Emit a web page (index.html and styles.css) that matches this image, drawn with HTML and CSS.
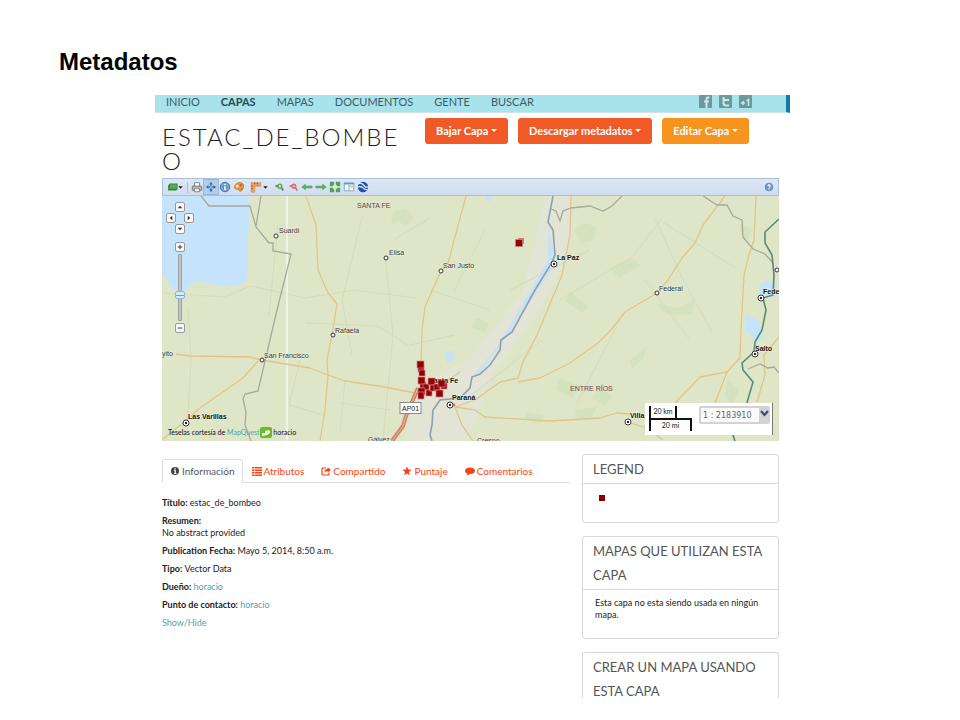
FILE: index.html
```html
<!DOCTYPE html>
<html lang="es">
<head>
<meta charset="utf-8">
<title>Metadatos</title>
<link rel="stylesheet" href="styles.css">
</head>
<body>
<h1 class="slide-title">Metadatos</h1>
<div class="app">
  <header class="topbar">
    <nav class="menu">
      <a href="#">INICIO</a><a href="#" class="current">CAPAS</a><a href="#">MAPAS</a><a href="#">DOCUMENTOS</a><a href="#">GENTE</a><a href="#">BUSCAR</a>
    </nav>
    <div class="social">
      <a href="#" aria-label="Facebook"><svg viewBox="0 0 13 13"><rect width="13" height="13" rx="1" fill="#6f979d"/><path d="M10.500 2.500H9Q7.500 2.500 7.500 4V13M5 6.500h5" fill="none" stroke="#c3edf2" stroke-width="2"/></svg></a>
      <a href="#" aria-label="Twitter"><svg viewBox="0 0 13 13"><rect width="13" height="13" rx="1" fill="#6f979d"/><path d="M4.500 2v6Q4.500 10.500 7 10.500h3M4.500 5H10" fill="none" stroke="#c3edf2" stroke-width="2"/></svg></a>
      <a href="#" aria-label="Google +1"><svg viewBox="0 0 13 13"><rect width="13" height="13" rx="1" fill="#6f979d"/><path d="M2 8h4M4 6v4M7.500 6l2-1.500V11" fill="none" stroke="#c3edf2" stroke-width="1.500"/></svg></a>
    </div>
  </header>

  <main class="content">
    <div class="heading">
      <h2>ESTAC_DE_BOMBEO</h2>
      <div class="actions">
        <button type="button" class="btn">Bajar Capa <i class="caret"></i></button>
        <button type="button" class="btn">Descargar metadatos <i class="caret"></i></button>
        <button type="button" class="btn edit">Editar Capa <i class="caret"></i></button>
      </div>
    </div>

    <section class="viewer">
      <div class="toolbar">
        <button type="button" class="wide" aria-label="Capas"><svg viewBox="0 0 20 14"><path d="M4 3h9v7l-2 1H2V5z" fill="#34843d"/><path d="M4 4h8v5H4z" fill="#5aac52"/><path d="M14 6h5l-2.500 3z" fill="#111"/></svg></button>
        <span class="sep"></span>
        <button type="button" aria-label="Imprimir"><svg viewBox="0 0 14 14"><path d="M4 6V2h6v4" fill="#fff" stroke="#777"/><rect x="1.500" y="6" width="11" height="5" rx="1" fill="#bbb" stroke="#666"/><path d="M4 9h6v3.500H4z" fill="#fff" stroke="#777"/></svg></button>
        <button type="button" class="pressed" aria-label="Mover"><svg viewBox="0 0 14 14"><path d="M7 3v8M3 7h8" stroke="#3974b5" stroke-width="1.500" stroke-dasharray="3 2"/><path d="M5 4l2-3 2 3zM5 10l2 3 2-3zM4 5L1 7l3 2zM10 5l3 2-3 2z" fill="#2c69ad"/></svg></button>
        <button type="button" aria-label="Identificar"><svg viewBox="0 0 14 14"><circle cx="7" cy="7" r="5.500" fill="#5d91c9" stroke="#39699f"/><circle cx="7" cy="7" r="4" fill="none" stroke="#a9c8e8" stroke-width=".8"/><path d="M7 3.500V5M7 6v4.500" stroke="#fff" stroke-width="1.800"/></svg></button>
        <button type="button" aria-label="Estilos"><svg viewBox="0 0 14 14"><path d="M2 6Q4 1 10 2q4 2 2 6-1 4-4 4l-1-2H5Q1 9 2 6z" fill="#ee9a3b" stroke="#c67521"/><circle cx="5" cy="6" r="1.500" fill="#fff1cb"/><circle cx="9" cy="5" r="1.500" fill="#d65c36"/><circle cx="10" cy="9" r="1" fill="#61964b"/></svg></button>
        <button type="button" class="wide measure" aria-label="Medir"><svg viewBox="0 0 20 14"><path d="M1 2h11v4H5v7H1z" fill="#f1a15a" stroke="#c8702c" stroke-width=".6"/><path d="M5 2v2M8 2v2M1 6h2M1 9h2" stroke="#995018"/><path d="M15 6h5l-2.500 3z" fill="#111"/></svg></button>
        <button type="button" aria-label="Acercar"><svg viewBox="0 0 14 14"><circle cx="8" cy="6" r="3" fill="#58a84d"/><path d="M3 6l3 0M10 8l2 3" stroke="#448540" stroke-width="2"/><path d="M6.500 6h3M8 4.500v3" stroke="#fff"/></svg></button>
        <button type="button" aria-label="Alejar"><svg viewBox="0 0 14 14"><circle cx="8" cy="6" r="3" fill="#df6b68"/><path d="M3 6l3 0M10 8l2 3" stroke="#c77772" stroke-width="2"/><path d="M6.500 6h3" stroke="#fff"/></svg></button>
        <button type="button" aria-label="Anterior"><svg viewBox="0 0 14 14"><path d="M1 7l4-3v2h8v2H5v2z" fill="#67b45a" stroke="#3c8837" stroke-width=".7"/></svg></button>
        <button type="button" aria-label="Siguiente"><svg viewBox="0 0 14 14"><path d="M13 7L9 4v2H1v2h8v2z" fill="#67b45a" stroke="#3c8837" stroke-width=".7"/></svg></button>
        <button type="button" aria-label="Extensión"><svg viewBox="0 0 14 14"><path d="M1 1h5v3L4 6H1zM13 1v5h-3L8 4V1zM1 13V8h3l2 2v3zM13 13H8v-3l2-2h3z" fill="#55a44c"/></svg></button>
        <button type="button" aria-label="Leyenda"><svg viewBox="0 0 14 14"><path d="M1.500 2.500h11v9h-11z" fill="#f9fcff" stroke="#6c9ed0"/><path d="M1 2h12v2H1z" fill="#609bd5"/><path d="M8 5h4v3H8z" fill="#f3d46e"/><path d="M7 4v7" stroke="#6c9ed0"/></svg></button>
        <button type="button" aria-label="Vista 3D"><svg viewBox="0 0 14 14"><circle cx="7" cy="7" r="6" fill="#244fa5"/><path d="M2 3q4-1 6 2t5 2M1 7q4-1 6 1t5 2" fill="none" stroke="#e2efff" stroke-width="1.500"/></svg></button>
        <button type="button" class="help" aria-label="Ayuda"><svg viewBox="0 0 14 14"><circle cx="7" cy="7" r="4.500" fill="#7397c8" stroke="#6787b2"/><path d="M5.500 5.500q1.500-2 3 0 0 1-1.500 2M7 8.500V10" fill="none" stroke="#fff" stroke-width="1.300"/></svg></button>
      </div>
      <div class="map">
        <svg class="tiles" viewBox="162 196 617 245" preserveAspectRatio="xMidYMid slice" role="img" aria-label="Mapa de Santa Fe y Entre Ríos">
          <rect x="162" y="196" width="617" height="245" fill="#dfe6c8"/>
          <path d="M545 196h28l-6 60-26 52-48 66-26 66h-62l12-55 54-27 50-64 14-50z" fill="#e2e4d8" opacity=".8"/>
          <path d="M162 196h86l2 10-2 32v32q0 13-10 15-14 3-30-2-13-3-17 2-6 8-14 6-8-3-10-12l-5-6zM759 284l9-4 9 5-3 13-15-4zM745 314l14 7 5 16-10 5-8-12z" fill="#c5e3fb"/>
          <path d="M548 228l7 28-6 18-23 33-19 29-26 36-7 3 24-30 24-40 26-46zM445 352l8-2 2 8-8 6zM485 196h8l-4 7z" fill="#c9e2f3"/>
          <g fill="#c6dcb5" opacity=".4"><path d="M393 212l12-3 9 9-8 8-8-5-7 3zM574 229l11-6 12 4-3 13-13 4zM609 268l24-10 7 7-21 13zM656 303l22 5 18-10-5 17-25-1zM740 224l12 5-4 11-7-5zM570 292l19 15-7 6-17-12zM476 318l13 4-3 11-14-6zM560 378l18 8-5 12-17-8zM599 388l14 8-8 9-13-7zM630 360l17-13-4 12-11 10zM728 380l11 10-7 15-8-10zM575 410l22-3-5 10-15 3zM528 412l17 4-5 8-15-5z"/></g>
          <g fill="none" stroke="#cbd3b6" stroke-width="1" opacity=".6"><path d="M162 293l62 4 27-11 54 12 49-8 63 8M278 225l-9 90M362 217l-20 83 10 55M306 323l72 3 31 20M300 360l-11 45 35 10M345 381l-5 50M385 255l8 80-10 105M430 290l60 20M410 345l45-10M465 400l80-62M560 300l72-43 31-40M655 218l27 60 30 54M663 222l74 47M620 320l-43 83M645 280l45 60M188 310l3 50-4 70M590 250l-80 40M390 410l-50-7M430 218l-35 21M485 230l-31 61"/></g>
          <path d="M287 196v245" stroke="#f5f7ec" stroke-width="1.500"/>
          <g fill="none" stroke="#ddc689" stroke-width="1.300" stroke-linejoin="round">
            <path d="M306 196l10 29 2 45 10 23 9 11-5 31-5 25 1 15-3 35-5 31M466 196l-18 67-7 8-16 36-3 23-1 34M571 196l-1 39-8 40-25 60-14 27-5 16-18 4-25 18-20 7 20 3 10 7 65 4 50-3 17-5 13 1M455 407l7 18 11 16M598 343l-28 20-30 15-22 4M725 196l-22 29-8 18-13 15-14 22-11 13-32 19-14 18-13 13M756 196l-2 44-5 15-5 20-3 55-1 28-13 14-27 5-25 26M727 372l-12 31M779 337l-15 18 1 20-8 27"/>
            <path d="M176 354l14 2 60 1 12 3 48 8 18 7 17 6 40 6 30 6M258 361l-15 17-43 30-17 15-21 17M435 389l25-17M627 422l20 6 16 12"/>
          </g>
          <path d="M418 388l-12 28-3 10-11 15" fill="none" stroke="#cf816a" stroke-width="4"/><path d="M418 388l-12 28-3 10-11 15" fill="none" stroke="#e8b8a0" stroke-width="1"/>
          <g fill="none" stroke="#a8a89d" stroke-width="1.300"><path d="M201 196l8 10h41l6 21 13 16h4v8l18 3-14 56-19 81-13 3-2 5 3 13-1 13 6 16M261 196l-5 30M551 209l5 2 4 10 3-10 8-3 19-2 13 5 9-5 10-10M703 196l14 9h10l6 11 9 4 1 17 10 12 12 5 8 9M748 369l12-5 8 4 6-1 5 6"/></g>
          <path d="M553 196l-5 26 5 8 2 25-4 9-16 26-23 42-11 8-1 10-10 15-10 9-8 3-2 11-10 10-20 2-7 10-1 15-2 10 2 6" fill="none" stroke="#8f9fb2" stroke-width="1.600"/>
          <path d="M779 219l-14 13v11l7 12 2 20-1 20-10 3 3 12-4 20-7 12-1 10-12 11 1 7 10 12-9 31-11 22 2 6" fill="none" stroke="#5a8a75" stroke-width="1.600"/>
          <g fill="#fff" stroke="#333" stroke-width="1"><circle cx="276" cy="236" r="2"/><circle cx="386" cy="258" r="2"/><circle cx="441" cy="271" r="2"/><circle cx="657" cy="293" r="2"/><circle cx="333" cy="335" r="2"/><circle cx="262" cy="360" r="2"/><circle cx="777" cy="270" r="2"/>
          <circle cx="554" cy="264" r="3"/><circle cx="761" cy="298" r="3"/><circle cx="755" cy="354" r="3"/><circle cx="186" cy="423" r="3"/><circle cx="450" cy="405" r="3"/><circle cx="628" cy="422" r="3"/></g>
          <path d="M553 264h2M760 298h2M754 354h2M185 423h2M449 405h2M627 422h2" stroke="#222" stroke-width="2"/>
          <g class="towns"><text x="279" y="233">Suardi</text><text x="389" y="255">Elisa</text><text x="443" y="268">San Justo</text><text x="659" y="291">Federal</text><text x="335" y="333">Rafaela</text><text x="264" y="358">San Francisco</text><text x="162" y="356">yito</text><text x="368" y="442">Gálvez</text><text x="477" y="443">Crespo</text></g>
          <g class="towns major"><text x="557" y="260">La Paz</text><text x="763" y="294">Fede</text><text x="755" y="351">Salto</text><text x="188" y="419">Las Varillas</text><text x="429" y="383">Santa Fe</text><text x="452" y="400">Paraná</text><text x="630" y="418">Villa</text></g>
          <g class="regions"><text x="357" y="208">SANTA FE</text><text x="570" y="391">ENTRE RÍOS</text></g>
          <rect x="400" y="402.500" width="21" height="11" fill="#fff" stroke="#888"/><text x="402" y="411" class="route">AP01</text>
          <rect x="518" y="238" width="6" height="6" fill="#d9797a"/>
          <g fill="#930006" stroke="#cf8889" stroke-width=".7"><rect x="515.500" y="239.500" width="7" height="7"/><rect x="418" y="366" width="6" height="6"/><rect x="417" y="361" width="7" height="7"/><rect x="419" y="370" width="6" height="6"/><rect x="420" y="382" width="6" height="6"/><rect x="418" y="377" width="7" height="7"/><rect x="423" y="384" width="6" height="6"/><rect x="418" y="388" width="7" height="7"/><rect x="426" y="390" width="6" height="6"/><rect x="428" y="378" width="7" height="7"/><rect x="430" y="385" width="6" height="6"/><rect x="434" y="384" width="6" height="6"/><rect x="441" y="383" width="6" height="6"/><rect x="438" y="380" width="7" height="7"/><rect x="436" y="390" width="7" height="7"/><rect x="418" y="392" width="6" height="7"/></g>
          <circle cx="454" cy="405" r="1.500" fill="#dc705e"/>
        </svg>
        <div class="pan">
          <button type="button" class="up" aria-label="Norte"><svg viewBox="0 0 9 9"><path d="M2 6l2.500-3L7 6z"/></svg></button>
          <button type="button" class="left" aria-label="Oeste"><svg viewBox="0 0 9 9"><path d="M6 2L3 4.500 6 7z"/></svg></button>
          <button type="button" class="right" aria-label="Este"><svg viewBox="0 0 9 9"><path d="M3 2l3 2.500L3 7z"/></svg></button>
          <button type="button" class="down" aria-label="Sur"><svg viewBox="0 0 9 9"><path d="M2 3l2.500 3L7 3z"/></svg></button>
        </div>
        <div class="zoom">
          <button type="button" aria-label="Más"><svg viewBox="0 0 9 9"><path d="M2 4h5v1H2zM4 2h1v5H4z"/></svg></button>
          <input type="range" min="0" max="100" value="36" aria-label="Nivel de zoom">
          <button type="button" aria-label="Menos"><svg viewBox="0 0 9 9"><path d="M2 4h5v1H2z"/></svg></button>
        </div>
        <p class="credits">Teselas cortesía de <a href="#">MapQuest</a><svg viewBox="0 0 12 11"><rect width="12" height="11" rx="2" fill="#73b72b"/><path d="M2 6h3V4l3-1 2 1v2L7 8 2 9z" fill="#eff9df"/></svg> horacio</p>
        <div class="scale">
          <div class="bars"><span class="km">20 km</span><span class="mi">20 mi</span></div>
          <div class="picker"><select aria-label="Escala"><option>1 : 2183910</option></select><svg viewBox="0 0 11 14"><path d="M2 4l3.500 4L9 4" fill="none" stroke="#34438c" stroke-width="2"/></svg></div>
        </div>
      </div>
    </section>

    <div class="columns">
      <section class="details">
        <nav class="tabs">
          <a href="#" class="active"><svg viewBox="0 0 10 10"><circle cx="5" cy="5" r="4" fill="#444"/><path d="M5 2v1.500M4 4.500h1.200V8M4 7.500h2.500" stroke="#fff" stroke-width="1.200" fill="none"/></svg>Información</a>
          <a href="#"><svg viewBox="0 0 10 10"><path d="M0 1h2v1.500H0zM0 3.500h2V5H0zM0 6h2v1.500H0zM0 8.500h2V10H0zM2.500 1H10v1.500H2.500zM2.500 3.500H10V5H2.500zM2.500 6H10v1.500H2.500zM2.500 8.500H10V10H2.500z"/></svg>Atributos</a>
          <a href="#"><svg viewBox="0 0 10 10"><path d="M5 2H2Q1 2 1 3v5q0 1 1 1h5q1 0 1-1V6.500" fill="none" stroke="#fa4311" stroke-width="1.200"/><path d="M3.500 7Q3 3 6.500 3V1L10 4 6.500 6.500V5Q4 5 3.500 7z"/></svg>Compartido</a>
          <a href="#"><svg viewBox="0 0 10 10"><path d="M5 .5l1.300 3 3.200.3L7 6l.8 3.300L5 7.600 2.200 9.300 3 6 .5 3.800l3.200-.3z"/></svg>Puntaje</a>
          <a href="#"><svg viewBox="0 0 10 10"><path d="M5 1.500c3 0 5 1.300 5 3.200S8 8 5 8L2 9.500 2.300 7.500C.8 7 0 6 0 4.700 0 2.800 2 1.500 5 1.500z"/></svg>Comentarios</a>
        </nav>
        <dl class="facts">
          <div><dt>Título:</dt> <dd>estac_de_bombeo</dd></div>
          <div class="stacked"><dt>Resumen:</dt> <dd>No abstract provided</dd></div>
          <div><dt>Publication Fecha:</dt> <dd>Mayo 5, 2014, 8:50 a.m.</dd></div>
          <div><dt>Tipo:</dt> <dd>Vector Data</dd></div>
          <div><dt>Dueño:</dt> <dd><a href="#">horacio</a></dd></div>
          <div><dt>Punto de contacto:</dt> <dd><a href="#">horacio</a></dd></div>
        </dl>
        <a href="#" class="toggle">Show/Hide</a>
      </section>
      <aside class="side">
        <section class="panel"><h3>LEGEND</h3><div class="body legend"><span class="swatch"></span></div></section>
        <section class="panel"><h3>MAPAS QUE UTILIZAN ESTA CAPA</h3><div class="body"><p>Esta capa no esta siendo usada en ningún mapa.</p></div></section>
        <section class="panel open"><h3>CREAR UN MAPA USANDO ESTA CAPA</h3></section>
      </aside>
    </div>
  </main>
</div>
</body>
</html>
```

FILE: styles.css
```css
* { box-sizing: border-box; }
body { margin: 0; background: #fff; color: #222; font-family: Lato, "Liberation Sans", sans-serif; font-size: 9px; line-height: 12px; }
h1, h2, h3, p, dl, dd { margin: 0; }
a { color: #4aa5b5; text-decoration: none; }
button { font: inherit; cursor: pointer; }
svg { display: block; }

.slide-title { padding: 48px 59px 19px; font: bold 24px/28px "Liberation Sans", Arial, sans-serif; color: #000; }
.app { margin: 0 170px 0 155px; }

.topbar { display: flex; justify-content: space-between; height: 18px; padding: 0 34px 0 11px; background: #a8e3ec; border-right: 4px solid #1479ad; border-bottom: 1px solid #cfe4e6; }
.menu { display: flex; gap: 21px; font-size: 11px; line-height: 14px; }
.menu a { color: #3f5c60; }
.menu .current { font-weight: bold; color: #29484c; }
.social { display: flex; gap: 7px; }
.social svg { width: 13px; height: 13px; }

.content { padding: 0 11px 0 7px; }
.heading { display: flex; justify-content: space-between; padding: 5px 30px 0 0; height: 65px; }
.heading h2 { flex: 0 0 244px; padding-top: 7px; font-size: 24px; line-height: 24px; font-weight: 300; letter-spacing: 2px; word-break: break-all; color: #222; }
.actions { display: flex; gap: 10px; align-items: flex-start; }
.btn { height: 26px; padding: 0 11px; border: 0; border-radius: 3px; background: #f15a27; color: #fff; font-weight: bold; font-size: 11px; white-space: nowrap; }
.btn.edit { background: #f7941e; }
.caret { display: inline-block; vertical-align: 3px; border: 3px solid transparent; border-top-color: #fff; border-bottom: 0; }

.toolbar { display: flex; align-items: center; height: 18px; padding: 0 2px 0 1px; background: linear-gradient(#dde8f6, #cfddf0); border: 1px solid #a9bfdc; }
.toolbar button { width: 14px; height: 14px; padding: 0; border: 0; background: none; }
.toolbar svg { width: 12px; height: 12px; margin: auto; }
.toolbar .wide { width: 22px; }
.toolbar .wide svg { width: 18px; }
.toolbar .measure { width: 26px; }
.toolbar .pressed { background: #b4cce9; outline: 1px solid #9bb8dc; }
.toolbar .help { margin-left: auto; }
.sep { width: 1px; height: 11px; margin: 0 2px 0 1px; background: #a9bfdc; }

.map { position: relative; height: 245px; overflow: hidden; }
.tiles { width: 100%; height: 100%; }
.towns { font: 7px Arial, "Liberation Sans", sans-serif; fill: #333; stroke: #eef2de; stroke-width: 1px; paint-order: stroke; }
.major { font-weight: bold; fill: #111; }
.regions { font: 7px "Liberation Sans", sans-serif; fill: #704444; }
.route { font: 7px "Liberation Sans", sans-serif; fill: #222; }
.pan button, .zoom button { width: 10px; height: 10px; padding: 0; border: 1px solid #999; border-radius: 2px; background: #f8f8f8; }
.pan svg, .zoom svg { width: 8px; height: 8px; fill: #333; }
.pan { position: absolute; left: 4px; top: 6px; display: grid; grid-template: repeat(3, 10px) / repeat(3, 9px); gap: 1px 0; }
.up { grid-area: 1 / 2; } .left { grid-area: 2 / 1; } .right { grid-area: 2 / 3; } .down { grid-area: 3 / 2; }
.zoom { position: absolute; left: 13px; top: 46px; display: flex; flex-direction: column; align-items: center; gap: 2px; }
.zoom input { appearance: none; writing-mode: vertical-lr; direction: rtl; width: 10px; height: 67px; margin: 0; background: none; }
.zoom input::-webkit-slider-runnable-track { width: 4px; background: #c3c3c3; border: 1px solid #a0a0a0; border-radius: 1px; }
.zoom input::-webkit-slider-thumb { appearance: none; width: 10px; height: 8px; margin-left: -4px; border: 1px solid #8fb6e6; border-radius: 2px; background: linear-gradient(#d3e8ff 45%, #6d9ddd 45% 60%, #d3e8ff 60%); }
.credits { position: absolute; left: 6px; bottom: 3px; display: flex; align-items: center; white-space: pre; font-size: 7px; color: #111; }
.credits svg { width: 12px; height: 11px; }
.scale { position: absolute; right: 6px; bottom: 6px; display: flex; gap: 7px; width: 128px; height: 32px; padding: 3px 2px 0 4px; background: #fff; border-right: 1px solid #777; }
.bars { display: grid; align-content: start; width: 43px; font: 7px/10px Lato, sans-serif; text-align: center; color: #111; }
.km { width: 28px; height: 12px; border: solid #111; border-width: 0 2px; }
.mi { height: 13px; border: solid #111; border-width: 2px 2px 0; }
.picker { position: relative; flex: 1; height: 18px; }
.picker select { appearance: none; width: 100%; height: 18px; padding: 0 2px; border: 2px solid #d2d2d2; border-right-width: 11px; border-radius: 2px; background: #fafafa; color: #666; font: 8px "DejaVu Sans", sans-serif; }
.picker svg { position: absolute; right: 0; top: 1px; width: 11px; height: 14px; pointer-events: none; }

.columns { display: grid; grid-template-columns: 1fr 197px; gap: 12px; padding-top: 13px; }
.tabs { display: flex; margin-top: 5px; height: 24px; border-bottom: 1px solid #ddd; font-size: 10px; line-height: 22px; }
.tabs a { display: flex; align-items: center; gap: 2px; height: 24px; padding: 0 7px; margin-right: 1px; border: 1px solid transparent; color: #fa4311; white-space: nowrap; }
.tabs svg { width: 10px; height: 10px; fill: #fa4311; }
.tabs .active { color: #555; border-color: #ddd; border-bottom-color: #fff; border-radius: 3px 3px 0 0; background: #fff; }
.facts { display: grid; gap: 6px; margin: 14px 0 6px; }
.facts dt, .facts dd { display: inline; }
.facts dt { font-weight: bold; }
.facts .stacked dd { display: block; }
.toggle { display: block; }

.side { display: grid; gap: 13px; }
.panel { border: 1px solid #d8d8d8; border-radius: 3px; overflow: hidden; }
.panel h3 { padding: 2px 10px; border-bottom: 1px solid #d8d8d8; font-size: 13px; line-height: 24px; font-weight: normal; color: #555; }
.panel .body { padding: 7px 12px 17px; }
.panel .legend { padding: 11px 16px 21px; }
.swatch { display: block; width: 6px; height: 6px; background: #850006; }
.panel.open { border-bottom: 0; border-radius: 3px 3px 0 0; }
.panel.open h3 { border-bottom: 0; padding-bottom: 0; margin-bottom: -5px; }
```
